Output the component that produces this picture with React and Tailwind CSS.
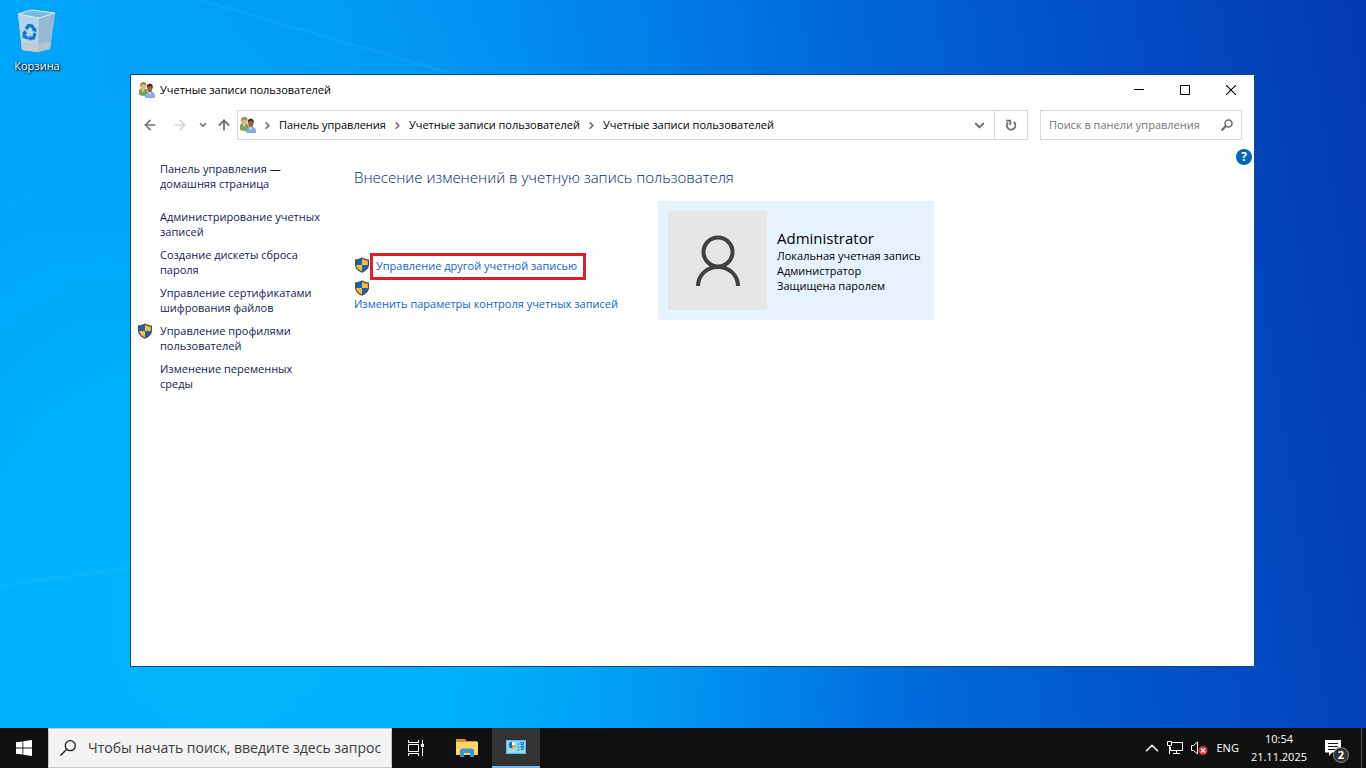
import React from 'react';
import { ArrowLeft, ArrowRight, ArrowUp, ChevronDown, ChevronRight, ChevronUp } from 'lucide-react';

const crumbs = ['Панель управления', 'Учетные записи пользователей', 'Учетные записи пользователей'];

const tasks = [
  { label: 'Администрирование учетных записей' },
  { label: 'Создание дискеты сброса пароля' },
  { label: 'Управление сертификатами шифрования файлов' },
  { label: 'Управление профилями пользователей', shield: true },
  { label: 'Изменение переменных среды' },
];

function Shield({ className = '' }) {
  return (
    <svg viewBox="0 0 16 16" className={`size-4 shrink-0 ${className}`} aria-hidden="true">
      <path d="M8 .3C6 1.800 3.600 2.300 1 2.400v4.800c0 4 2.600 6.700 7 8.500 4.400-1.800 7-4.500 7-8.500V2.400C12.400 2.300 10 1.800 8 .3z" fill="#4a4a48" />
      <path d="M8 1.800C6.300 3 4.300 3.500 2.200 3.600V8H8z" fill="#1266b8" />
      <path d="M8 1.800c1.700 1.200 3.700 1.700 5.800 1.800V8H8z" fill="#fcbb3a" />
      <path d="M2.200 8H8v6.400C4.600 12.900 2.400 10.900 2.200 8z" fill="#fcbb3a" />
      <path d="M13.800 8H8v6.400c3.400-1.500 5.600-3.500 5.800-6.400z" fill="#1266b8" />
    </svg>
  );
}

function UsersIcon() {
  return (
    <svg viewBox="0 0 16 16" className="size-4 shrink-0" aria-hidden="true">
      <path d="M.2 12.500V9.500C.2 7.500 1.700 6 4 6s4 1.500 4.300 3.500l-1 4C4.500 13.800 2 13.500.2 12.500z" fill="#7aa653" stroke="#557f37" strokeWidth=".5" />
      <path d="M2.700 7 4 10l1.500-3z" fill="#e8efd8" />
      <ellipse cx="4.200" cy="4" rx="2.700" ry="3.600" fill="#dfb67f" />
      <path d="M1.200 5C.5 1.500 2.100 0 4.300 0s3.700 1.200 3.100 4.200C6.600 2.700 4.600 2 3 2.700c-.8.500-.9 1.300-1.800 2.300z" fill="#a98244" />
      <path d="M6.200 15.200c-.2-3.400 1-5.400 4.500-5.400s5.200 2 5.200 5.400c-2.600.9-6.900.9-9.700 0z" fill="#86b0e6" stroke="#5582bb" strokeWidth=".5" />
      <path d="m9.200 10.300 1.500 2.500 1.500-2.500z" fill="#e6f0fb" />
      <ellipse cx="10.800" cy="6.600" rx="2.600" ry="3.600" fill="#9b6239" />
      <path d="M8 6.400c-.7-3.300.8-4.700 2.900-4.700s3.500 1.600 2.700 4.800c-.6-1.900-1.500-2.400-3.100-2.400S8.500 5.100 8 6.400z" fill="#3d2f28" />
    </svg>
  );
}

function RecycleBin() {
  return (
    <svg viewBox="0 0 40 44" className="h-11 w-10" aria-hidden="true">
      <path d="m1 5 13-4 24 3-5 36-12 3-16-2z" fill="#b4d3e8" />
      <path d="m1 5 21 4-1 34-16-2z" fill="#b5d5ec" />
      <path d="m22 9 16-5-5 36-12 3z" fill="#94bad3" />
      <path d="m4 33 18 2 12-3-1 8-12 3-16-2z" fill="#c5c5c3" opacity=".7" />
      <path d="m1 5 13-4 24 3-16 5z" fill="#75bce4" stroke="#dcebf5" strokeWidth="1" />
      <g fill="none" stroke="#1476cf" strokeWidth="3.200">
        <path d="m9 20 2.500-3.500 3.500.5 2 3.500" />
        <path d="m18 24-1.500 5-4 .5" />
        <path d="M11 29 7 27.500 7.500 23" />
      </g>
      <path d="m15 21.500 4-3 .5 5zM14 26l-3.500 3.500L14 32zM5 24l3-3 2.500 4z" fill="#1476cf" />
    </svg>
  );
}

function Wallpaper() {
  return (
    <svg className="absolute inset-0 size-full" viewBox="0 0 1366 728" preserveAspectRatio="none" aria-hidden="true">
      <defs>
        <linearGradient id="base" gradientUnits="userSpaceOnUse" x1="0" y1="0" x2="1366" y2="-205">
          <stop offset="0" stopColor="#00a6fb" />
          <stop offset=".24" stopColor="#009df5" />
          <stop offset=".36" stopColor="#008fef" />
          <stop offset=".5" stopColor="#0078e4" />
          <stop offset=".65" stopColor="#0061d2" />
          <stop offset=".79" stopColor="#034ec6" />
          <stop offset=".98" stopColor="#0339b0" />
        </linearGradient>
        <radialGradient id="glow" gradientUnits="userSpaceOnUse" cx="240" cy="620" r="640">
          <stop offset="0" stopColor="#00b6fc" stopOpacity=".95" />
          <stop offset=".4" stopColor="#00b4fb" stopOpacity=".8" />
          <stop offset="1" stopColor="#00a0f5" stopOpacity="0" />
        </radialGradient>
      </defs>
      <path d="M0 0h1366v728H0z" fill="url(#base)" />
      <path d="M0 0h1366v728H0z" fill="url(#glow)" />
      <path d="m200 0 260 76M0 586l140-20" fill="none" stroke="#4cc4ff" strokeWidth="3" opacity=".13" />
    </svg>
  );
}

function TitleBar() {
  return (
    <header className="flex h-[30px] items-center pl-2">
      <UsersIcon />
      <h1 className="ml-[5px] flex-1">Учетные записи пользователей</h1>
      <button type="button" aria-label="Свернуть" className="flex h-full w-[46px] items-center justify-center">
        <svg viewBox="0 0 10 10" className="size-2.5"><path d="M0 4.500h10" stroke="#000" /></svg>
      </button>
      <button type="button" aria-label="Развернуть" className="flex h-full w-[46px] items-center justify-center">
        <svg viewBox="0 0 10 10" className="size-2.5"><path d="M.5.5h9v9h-9z" fill="none" stroke="#000" /></svg>
      </button>
      <button type="button" aria-label="Закрыть" className="flex h-full w-[46px] items-center justify-center">
        <svg viewBox="0 0 10 10" className="size-2.5"><path d="m0 0 10 10M10 0 0 10" stroke="#000" strokeWidth="1.100" /></svg>
      </button>
    </header>
  );
}

function Toolbar() {
  return (
    <div className="flex h-10 items-center pr-3 pl-[11px]">
      <nav className="flex w-[95px] items-center text-[#727272]">
        <button type="button" aria-label="Назад"><ArrowLeft size={16} strokeWidth={2.4} /></button>
        <button type="button" aria-label="Вперед" className="ml-3.5 text-[#d5d5d5]"><ArrowRight size={16} strokeWidth={2.4} /></button>
        <button type="button" aria-label="Последние" className="ml-2.5"><ChevronDown size={10} strokeWidth={4} /></button>
        <button type="button" aria-label="Вверх" className="ml-2"><ArrowUp size={16} strokeWidth={2.8} /></button>
      </nav>
      <div className="flex h-[30px] flex-1 items-center border border-[#d9d9d9]">
        <span className="ml-0.5"><UsersIcon /></span>
        {crumbs.map((crumb, i) => (
          <React.Fragment key={i}>
            <ChevronRight size={11} strokeWidth={3.5} className="mx-1.5 text-[#6a6a6a]" />
            <a href="#" className="whitespace-nowrap">{crumb}</a>
          </React.Fragment>
        ))}
        <button type="button" aria-label="Предыдущие расположения" className="ml-auto flex w-[30px] justify-center text-[#6a6a6a]">
          <ChevronDown size={15} strokeWidth={3.2} />
        </button>
        <button type="button" aria-label="Обновить" className="flex h-full w-[33px] items-center justify-center border-l border-[#d9d9d9]">
          <svg viewBox="0 0 12 12" className="size-3" fill="none" stroke="#6d6d6d" strokeWidth="1.700">
            <path d="M8.800 3A4.300 4.300 0 1 1 3 3.400" />
            <path d="M1.300 1.600h4V6" />
          </svg>
        </button>
      </div>
      <label className="ml-3 flex h-[30px] w-[202px] items-center border border-[#d9d9d9] px-2">
        <input type="text" aria-label="Поиск" placeholder="Поиск в панели управления" className="w-0 flex-1 outline-none placeholder:text-[#757575]" />
        <svg viewBox="0 0 12 12" className="size-3" fill="none" stroke="#666" strokeWidth="1.500">
          <circle cx="7.500" cy="4.500" r="3.500" />
          <path d="M5 7 .6 11.400" strokeWidth="2" />
        </svg>
      </label>
    </div>
  );
}

function Sidebar() {
  return (
    <aside className="w-[223px] shrink-0 pt-4 pl-[29px] leading-[15px] text-[#151c55]">
      <a href="#" className="block w-[150px]">Панель управления — домашняя страница</a>
      <ul className="mt-[18px] w-[165px] space-y-2">
        {tasks.map((task) => (
          <li key={task.label} className="relative">
            {task.shield && <Shield className="absolute -left-[23px]" />}
            <a href="#" className="block">{task.label}</a>
          </li>
        ))}
      </ul>
    </aside>
  );
}

function AccountCard() {
  return (
    <section className="flex items-center gap-2.5 bg-[#e5f3ff] p-2.5">
      <div className="flex size-[99px] items-center justify-center bg-[#e6e6e6]">
        <svg viewBox="0 0 46 52" className="h-[52px] w-[46px]" fill="none" stroke="#404040" strokeWidth="4">
          <circle cx="23" cy="17" r="14.500" />
          <path d="M3 51c0-11 9-19 20-19s20 8 20 19" />
        </svg>
      </div>
      <div className="w-[147px] leading-[15px] whitespace-nowrap text-black">
        <p className="text-[15px] leading-5">Administrator</p>
        <p>Локальная учетная запись</p>
        <p>Администратор</p>
        <p>Защищена паролем</p>
      </div>
    </section>
  );
}

function AccountsWindow() {
  return (
    <div className="absolute top-[74px] right-[111px] bottom-[61px] left-[130px] flex flex-col border border-[#0b4a80] bg-white text-[11px] text-black">
      <TitleBar />
      <Toolbar />
      <div className="flex flex-1">
        <Sidebar />
        <main className="flex-1 pt-5">
          <h2 className="text-[15px] leading-6 font-light text-[#00257a]">Внесение изменений в учетную запись пользователя</h2>
          <div className="mt-3 flex items-start text-[#0f66c2]">
            <div className="w-[304px] pt-[52px]">
              <div className="flex items-start">
                <Shield className="mt-1" />
                <a href="#" className="flex h-[27px] items-center border-3 border-[#dc2228] pr-1.5 pl-[3px] whitespace-nowrap">Управление другой учетной записью</a>
              </div>
              <Shield />
              <a href="#" className="block leading-[15px] whitespace-nowrap">Изменить параметры контроля учетных записей</a>
            </div>
            <AccountCard />
          </div>
        </main>
        <button type="button" aria-label="Справка" className="mt-1 mr-0.5 flex size-4 items-center justify-center rounded-full bg-[#0067b8] text-xs font-bold text-white">?</button>
      </div>
    </div>
  );
}

function Taskbar() {
  return (
    <footer className="flex h-10 shrink-0 items-center bg-[#101010] text-[11px] text-white">
      <button type="button" aria-label="Пуск" className="flex h-full w-12 items-center justify-center">
        <svg viewBox="0 0 16 16" className="size-4" fill="#fff">
          <path d="m0 2.300 6.500-.9v6.200H0zM7.300 1.300 16 0v7.600H7.300zM0 8.400h6.500v6.200L0 13.700zM7.300 8.400H16V16l-8.700-1.300z" />
        </svg>
      </button>
      <label className="flex h-full w-[344px] items-center border border-[#c8c8c8] bg-[#f3f3f3] pl-[11px]">
        <svg viewBox="0 0 16 16" className="size-4 shrink-0" fill="none" stroke="#1a1a1a" strokeWidth="1.300">
          <circle cx="10.300" cy="5.700" r="5" />
          <path d="M6.700 9.300.4 15.600" />
        </svg>
        <input type="text" aria-label="Поиск Windows" placeholder="Чтобы начать поиск, введите здесь запрос" className="ml-3 w-0 flex-1 text-sm outline-none placeholder:text-[#3b3b3b]" />
      </label>
      <button type="button" aria-label="Представление задач" className="flex h-full w-12 items-center justify-center">
        <svg viewBox="0 0 16 16" className="size-4" fill="none" stroke="#fff">
          <path d="M.5 0v2.500h10V0M.5 4.500h10v7H.5zM.5 16v-2.500h10V16M14.500 0v4M14.500 8v8" />
          <path d="M13 4h3v3h-3z" fill="#fff" stroke="none" />
        </svg>
      </button>
      <button type="button" aria-label="Проводник" className="ml-0.5 flex h-full w-[50px] items-center justify-center">
        <svg viewBox="0 0 22 18" className="h-[18px] w-[22px]">
          <path d="M0 0h9l1.500 2H21v3H0z" fill="#d9951c" />
          <path d="M0 3h22v13H0z" fill="#ffd766" />
          <path d="M4 18v-7l1.500-1.500h11L18 11v7h-4v-4H8v4z" fill="#3a93d4" />
        </svg>
      </button>
      <button type="button" aria-label="Панель управления" className="flex h-full w-12 items-center justify-center border-b-2 border-[#76b9ed] bg-[#333]">
        <svg viewBox="0 0 20 14" className="h-3.5 w-5">
          <path d="M0 0h20v14H0z" fill="#58bdf1" />
          <path d="M1 1h18v12H1z" fill="#91d8fa" />
          <circle cx="6" cy="5" r="3.300" fill="#1472bd" />
          <path d="M6 5V1.700A3.300 3.300 0 0 1 9.300 5z" fill="#fff" />
          <path d="M6 5h3.300A3.300 3.300 0 0 1 6 8.300z" fill="#f5a623" />
          <path d="M11.500 4h2M11.500 7h2M11.500 10h2M15 2.500h2.500v2H15zM15 6h2.500v2H15zM15 9.500h2.500" stroke="#1472bd" fill="none" />
          <path d="M2.500 11h2M5.500 11h4" stroke="#f5d66b" strokeWidth="1.500" />
        </svg>
      </button>
      <div className="ml-auto flex h-full items-center">
        <button type="button" aria-label="Скрытые значки"><ChevronUp size={22} strokeWidth={1.6} /></button>
        <svg viewBox="0 0 16 14" className="ml-1 h-3.5 w-4" fill="none" stroke="#fff">
          <path d="M5 1.500h10.500v8H3.500V6M9.500 9.500V13M6 12.500h7" />
          <path d="M.5.5h4v4h-4zM2.500 4.500V13" />
        </svg>
        <svg viewBox="0 0 17 16" className="ml-2 h-4 w-[17px]" fill="none">
          <path d="M.5 5.500h2L6.500 2v12l-4-3.500h-2z" stroke="#fff" />
          <circle cx="12" cy="10.500" r="4.500" fill="#e0343c" />
          <path d="m10 8.500 4 4m0-4-4 4" stroke="#fff" strokeWidth="1.200" />
        </svg>
        <span className="ml-2">ENG</span>
        <time className="ml-3 text-center leading-[18px]">10:54<br />21.11.2025</time>
        <button type="button" aria-label="Уведомления" className="relative ml-[18px] h-full w-9">
          <svg viewBox="0 0 16 16" className="absolute top-3 left-0 size-4">
            <path d="M0 0h16v12.500H7L4 16v-3.500H0z" fill="#fff" />
            <path d="M3 3.500h10M3 6.500h10M3 9.500h7" stroke="#101010" />
          </svg>
          <span className="absolute top-[19px] left-2 flex size-4 items-center justify-center rounded-full border border-[#8a8a8a] bg-[#333] font-bold">2</span>
        </button>
        <span className="h-full w-[5px] border-l border-[#555]" />
      </div>
    </footer>
  );
}

export default function App() {
  return (
    <div className="flex h-screen flex-col overflow-hidden font-['Open_Sans','Noto_Sans',sans-serif]">
      <div className="relative flex-1">
        <Wallpaper />
        <a href="#" className="absolute top-[9px] left-0 flex w-[74px] flex-col items-center text-[11px] text-white [text-shadow:1px_1px_2px_#000,0_0_2px_#000]">
          <RecycleBin />
          <span className="mt-1 leading-[18px]">Корзина</span>
        </a>
        <AccountsWindow />
      </div>
      <Taskbar />
    </div>
  );
}
